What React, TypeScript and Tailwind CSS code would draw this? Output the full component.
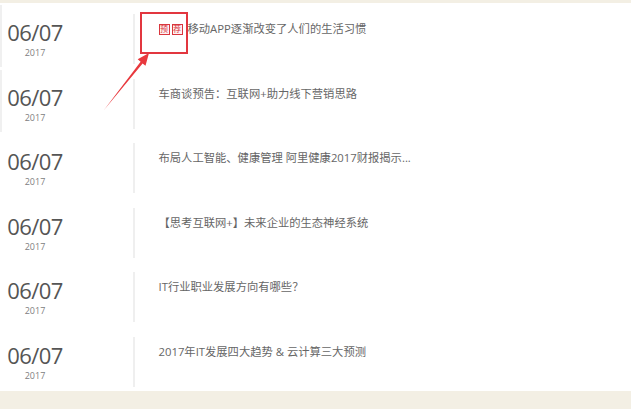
import React from "react";

const news = [
  { title: "移动APP逐渐改变了人们的生活习惯", hot: true },
  { title: "车商谈预告：互联网+助力线下营销思路" },
  { title: "布局人工智能、健康管理 阿里健康2017财报揭示..." },
  { title: "【思考互联网+】未来企业的生态神经系统" },
  { title: "IT行业职业发展方向有哪些？" },
  { title: "2017年IT发展四大趋势 & 云计算三大预测" },
];

const Badge = ({ ch }: { ch: string }) => (
  <span className="inline-flex items-center justify-center w-[11px] h-[11px] border border-[#d9363e] bg-[#fdf1f1] text-[#d9363e] text-[8px] leading-none">
    {ch}
  </span>
);

const App = () => {
  return (
    <div
      className="relative w-[631px] h-[409px] bg-[#f3efe4] overflow-hidden"
      style={{ fontFamily: '"Open Sans", "Noto Sans CJK SC", sans-serif' }}
    >
      <div className="mt-[3px] bg-white">
        {news.map((item, i) => (
          <div key={i} className="flex items-start h-[64.6px]">
            <div className={`w-[2px] h-[62px] mt-[2px] ${i < 2 ? "bg-[#f0f0f0]" : ""}`} />
            <div className="w-[66px] pt-[18px] flex flex-col items-center">
              <span className="text-[22px] leading-none text-[#555] tracking-[-0.6px]">06/07</span>
              <span className="text-[9px] leading-none mt-[5px] text-[#808080]">2017</span>
            </div>
            <div className="w-[65px]" />
            <div className="w-[1.5px] h-[50px] mt-[11px] bg-[#efefef]" />
            <div className="pl-[24px] mt-[18px] flex items-center gap-[3px] text-[11.3px] leading-[16px] text-[#666]">
              {item.hot && (
                <span className="flex gap-[2px] mr-[2px]">
                  <Badge ch="预" />
                  <Badge ch="荐" />
                </span>
              )}
              <span>{item.title}</span>
            </div>
          </div>
        ))}
      </div>

      {/* annotation overlay */}
      <div className="absolute left-[140px] top-[12px] w-[48px] h-[42px] border-2 border-[#e2363f]" />
      <svg className="absolute left-0 top-0" width="631" height="409">
        <polygon
          points="104,110 142.6,63.6 145.5,65.8 149,53 137.7,59.3 140.6,61.8"
          fill="#e8383d"
        />
      </svg>
    </div>
  );
};

export default App;
